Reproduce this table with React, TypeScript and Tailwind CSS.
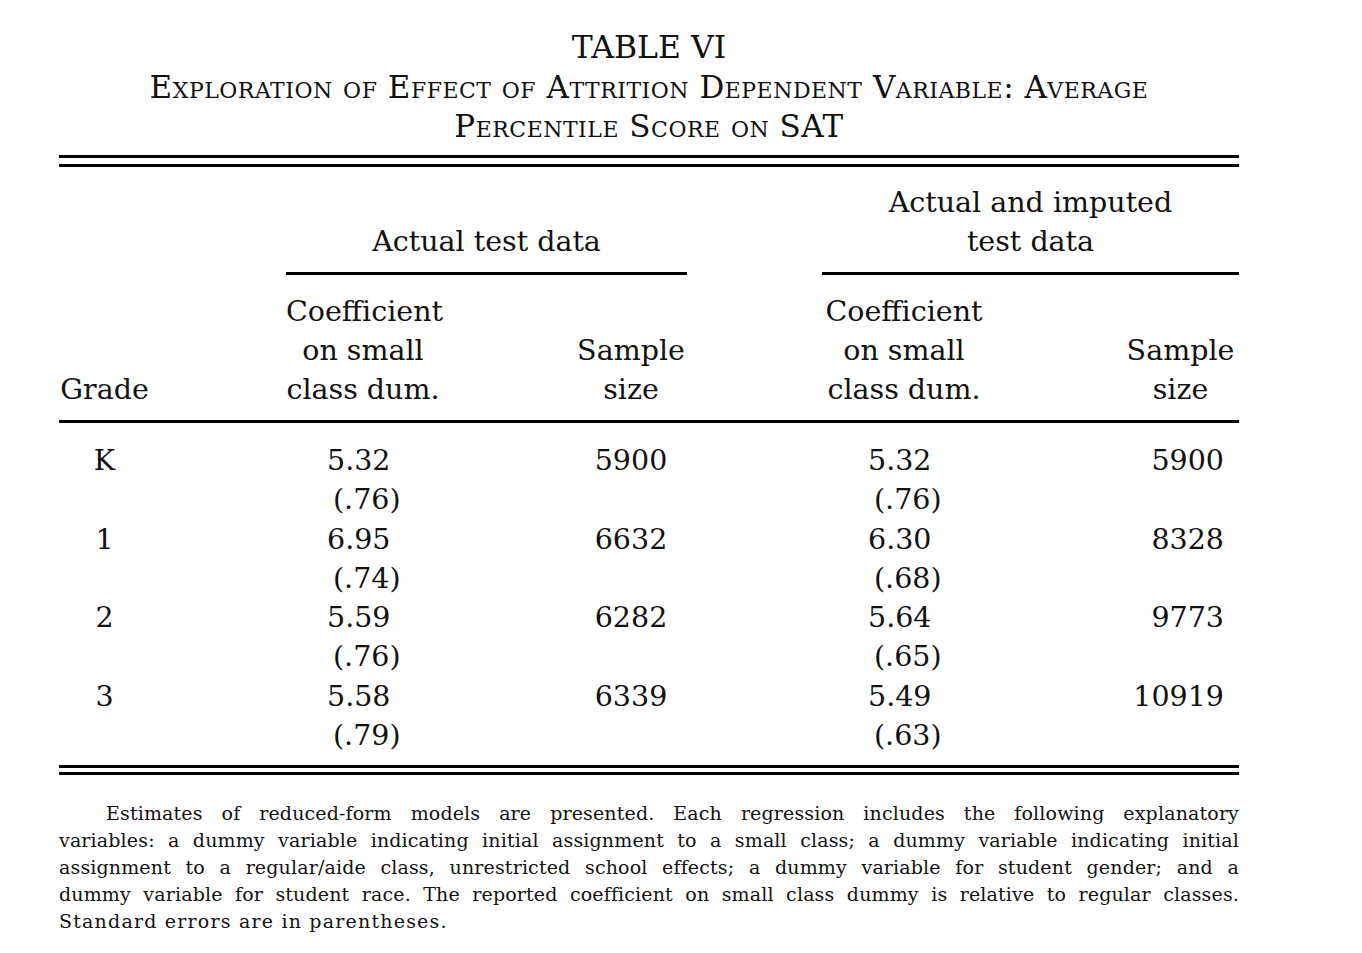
const rows = [
  { grade: "K", c1: "5.32", s1: "(.76)", n1: "5900", c2: "5.32", s2: "(.76)", n2: "5900" },
  { grade: "1", c1: "6.95", s1: "(.74)", n1: "6632", c2: "6.30", s2: "(.68)", n2: "8328" },
  { grade: "2", c1: "5.59", s1: "(.76)", n1: "6282", c2: "5.64", s2: "(.65)", n2: "9773" },
  { grade: "3", c1: "5.58", s1: "(.79)", n1: "6339", c2: "5.49", s2: "(.63)", n2: "10919" },
];

const Rule = ({ className = "" }: { className?: string }) => (
  <div className={`h-[3px] bg-black ${className}`} />
);

export default function App() {
  return (
    <div className="min-h-screen bg-white text-[#111] font-['DejaVu_Serif',serif]">
      <div className="ml-[59px] w-[1180px] pt-[27px]">
        {/* caption */}
        <div className="text-center">
          <div className="text-[31.5px] leading-[41px]">TABLE VI</div>
          <div className="text-[31px] leading-[39px] tracking-[0.5px] [font-variant-caps:small-caps]">
            Exploration of Effect of Attrition Dependent Variable: Average
          </div>
          <div className="text-[31px] leading-[39px] tracking-[0.5px] [font-variant-caps:small-caps]">
            Percentile Score on <span className="[font-variant-caps:normal]">SAT</span>
          </div>
        </div>

        <Rule className="mt-[9px]" />
        <Rule className="mt-[6px]" />

        {/* spanners */}
        <div className="text-[28.5px] leading-[39px]">
          <div className="mt-[16px] flex items-end">
            <div className="ml-[227px] w-[401px] text-center">Actual test data</div>
            <div className="ml-[135px] w-[417px] text-center">
              Actual and imputed
              <br />
              test data
            </div>
          </div>
          <div className="mt-[11px] flex">
            <div className="ml-[227px] h-[3px] w-[401px] bg-black" />
            <div className="ml-[135px] h-[3px] w-[417px] bg-black" />
          </div>

          {/* column heads */}
          <div className="mt-[17px] flex items-end">
            <div className="w-[91px] text-center">Grade</div>
            <div className="ml-[136px] w-[154px] text-center">
              Coefficient
              <br />
              on small
              <br />
              class dum.
            </div>
            <div className="ml-[135px] w-[112px] text-center">
              Sample
              <br />
              size
            </div>
            <div className="ml-[135px] w-[164px] text-center">
              Coefficient
              <br />
              on small
              <br />
              class dum.
            </div>
            <div className="ml-[136px] w-[117px] text-center">
              Sample
              <br />
              size
            </div>
          </div>
        </div>

        <Rule className="mt-[11px]" />

        {/* body */}
        <div className="mt-[18px] text-[28.5px] leading-[39.3px]">
          {rows.map((r) => (
            <div key={r.grade} className="flex">
              <div className="w-[91px] text-center">{r.grade}</div>
              <div className="ml-[136px] w-[154px] pl-[41px]">
                <div>{r.c1}</div>
                <div className="pl-[6px]">{r.s1}</div>
              </div>
              <div className="ml-[135px] w-[112px] text-center">{r.n1}</div>
              <div className="ml-[135px] w-[164px] pl-[46px]">
                <div>{r.c2}</div>
                <div className="pl-[6px]">{r.s2}</div>
              </div>
              <div className="ml-[136px] w-[117px] pr-[15px] text-right">{r.n2}</div>
            </div>
          ))}
        </div>

        <Rule className="mt-[10px]" />
        <Rule className="mt-[4px]" />

        {/* note */}
        <div className="mt-[25px] text-[19px] leading-[27px] tracking-[0.15px] [&>div]:text-justify [&>div]:[text-align-last:justify]">
          <div className="pl-[47px]">
            Estimates of reduced-form models are presented. Each regression includes the following explanatory
          </div>
          <div>
            variables: a dummy variable indicating initial assignment to a small class; a dummy variable indicating initial
          </div>
          <div>
            assignment to a regular/aide class, unrestricted school effects; a dummy variable for student gender; and a
          </div>
          <div>
            dummy variable for student race. The reported coefficient on small class dummy is relative to regular classes.
          </div>
          <div className="![text-align-last:left] tracking-[1.2px]">Standard errors are in parentheses.</div>
        </div>
      </div>
    </div>
  );
}
